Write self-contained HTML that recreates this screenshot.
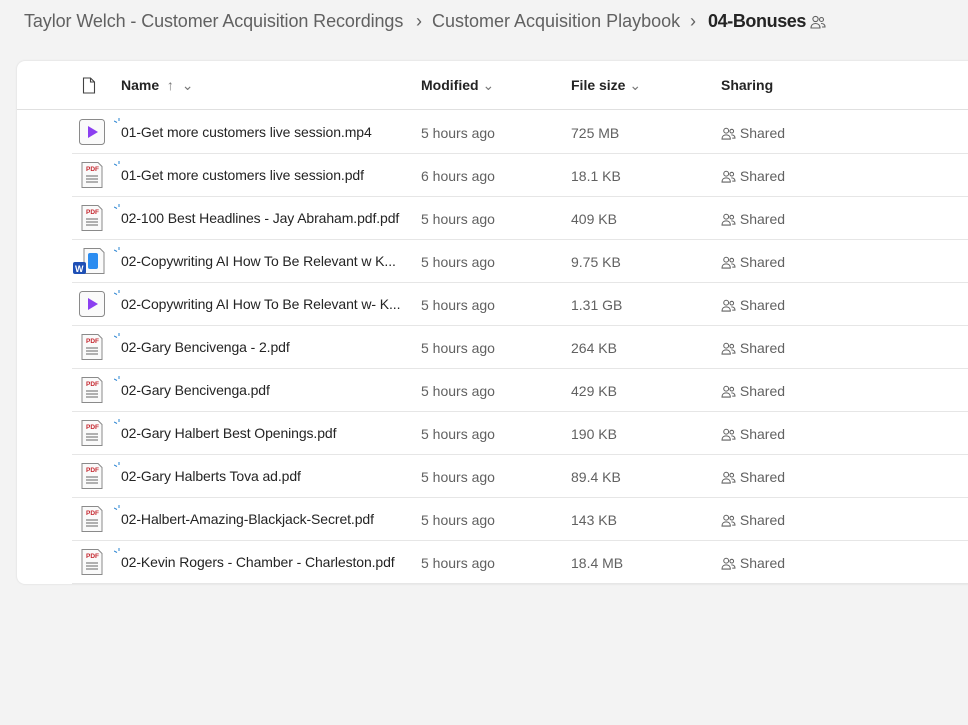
<!DOCTYPE html>
<html><head><style>
*{box-sizing:border-box;margin:0;padding:0}
body{width:968px;height:725px;background:#f3f3f3;font-family:"Liberation Sans",sans-serif;overflow:hidden;position:relative;color:#242424}
.bc{position:absolute;top:11px;left:24px;font-size:18px;color:#616161;white-space:nowrap}
.bc span{position:absolute;top:0;white-space:nowrap}
.card{position:absolute;left:17px;top:61px;width:960px;height:523px;background:#fff;border-radius:8px;box-shadow:0 0 2px rgba(0,0,0,.12)}
.hdr{position:absolute;left:0;top:0;width:100%;height:49px;border-bottom:1px solid #e0e0e0;font-size:14px;font-weight:bold}
.hdr span{position:absolute;top:16px}
.row{position:absolute;left:55px;width:905px;height:43px;border-bottom:1px solid #e6e6e6;font-size:14px}
.row .n{position:absolute;left:49px;top:13px;color:#242424;letter-spacing:-0.1px}
.row .m{position:absolute;left:349px;top:14px;color:#616161}
.row .s{position:absolute;left:499px;top:14px;color:#616161}
.row .sh{position:absolute;left:649px;top:14px;color:#616161}
.ic{position:absolute;left:6px;top:7px}
.spin{position:absolute;left:42px;top:7px}
</style></head><body>
<div class="bc">
<span style="left:0;letter-spacing:-0.1px">Taylor Welch - Customer Acquisition Recordings</span>
<span style="left:392px">›</span>
<span style="left:408px">Customer Acquisition Playbook</span>
<span style="left:666px">›</span>
<span style="left:684px;color:#242424;font-weight:bold;letter-spacing:-0.4px">04-Bonuses</span>
<svg style="position:absolute;left:786px;top:4px" width="16" height="14" viewBox="0 0 16 14" fill="none" stroke="#616161" stroke-width="1.1"><circle cx="5.5" cy="4" r="2.6"/><path d="M1 13c0-3 2-4.5 4.5-4.5S10 10 10 13z"/><circle cx="11.5" cy="4.5" r="2"/><path d="M11 8.5c2.5 0 4 1 4 3.5h-3"/></svg>
</div>
<div class="card">
<div class="hdr">
<svg style="position:absolute;left:65px;top:16px" width="14" height="17" viewBox="0 0 14 17" fill="none" stroke="#424242" stroke-width="1.1"><path d="M1.5 1h7l4 4v11h-11z M8.5 1v4h4"/></svg>
<span style="left:104px">Name <span style="position:static;font-weight:normal;color:#777">&nbsp;↑ &nbsp;⌄</span></span>
<span style="left:404px">Modified <span style="position:static;font-weight:normal;color:#777">⌄</span></span>
<span style="left:554px">File size <span style="position:static;font-weight:normal;color:#777">⌄</span></span>
<span style="left:704px">Sharing</span>
</div>
</div>
<div id="rows"></div>
<script>
var d=[["v","01-Get more customers live session.mp4","5 hours ago","725 MB"],
["p","01-Get more customers live session.pdf","6 hours ago","18.1 KB"],
["p","02-100 Best Headlines - Jay Abraham.pdf.pdf","5 hours ago","409 KB"],
["w","02-Copywriting AI How To Be Relevant w K...","5 hours ago","9.75 KB"],
["v","02-Copywriting AI How To Be Relevant w- K...","5 hours ago","1.31 GB"],
["p","02-Gary Bencivenga - 2.pdf","5 hours ago","264 KB"],
["p","02-Gary Bencivenga.pdf","5 hours ago","429 KB"],
["p","02-Gary Halbert Best Openings.pdf","5 hours ago","190 KB"],
["p","02-Gary Halberts Tova ad.pdf","5 hours ago","89.4 KB"],
["p","02-Halbert-Amazing-Blackjack-Secret.pdf","5 hours ago","143 KB"],
["p","02-Kevin Rogers - Chamber - Charleston.pdf","5 hours ago","18.4 MB"]];
var icons={
v:'<svg class="ic" width="28" height="28" viewBox="0 0 28 28"><rect x="1.5" y="1.5" width="25" height="25" rx="3" fill="#fafafa" stroke="#8a8a8a"/><path d="M10 8l10 6-10 6z" fill="#8b3ff0"/></svg>',
p:'<svg class="ic" width="28" height="28" viewBox="0 0 28 28"><path d="M4 1.5h16l4 4v21H4z" fill="#fafafa" stroke="#8a8a8a"/><text x="8" y="10" font-size="6.5" font-weight="bold" fill="#c4262e" font-family="Liberation Sans">PDF</text><path d="M8 15h12M8 18h12M8 21h12" stroke="#666" stroke-width="1"/></svg>',
w:'<svg class="ic" width="28" height="30" viewBox="0 0 28 30"><path d="M6 1.5h16l4 4v21H6z" fill="#fafafa" stroke="#8a8a8a"/><rect x="10" y="6" width="10" height="16" rx="2" fill="#2b8cf0"/><rect x="-5" y="15" width="13" height="12" rx="2" fill="#1e4fb5"/><text x="-3" y="25" font-size="9" font-weight="bold" fill="#fff" font-family="Liberation Sans">W</text></svg>'};
var h='';
d.forEach(function(r,i){
h+='<div class="row" style="top:'+(111+i*43)+'px;left:72px">'+icons[r[0]].replace('class="ic"','class="ic" style="overflow:visible"')+
'<svg class="spin" width="8" height="8" viewBox="0 0 8 8" stroke="#2a84d2" stroke-width="1"><path d="M5 0v3M0 3l3 1.5"/></svg>'+
'<span class="n">'+r[1]+'</span><span class="m">'+r[2]+'</span><span class="s">'+r[3]+'</span>'+
'<span class="sh"><svg width="15" height="13" viewBox="0 0 16 14" fill="none" stroke="#616161" stroke-width="1.1" style="vertical-align:-2px"><circle cx="5.5" cy="4" r="2.6"/><path d="M1 13c0-3 2-4.5 4.5-4.5S10 10 10 13z"/><circle cx="11.5" cy="4.5" r="2"/><path d="M11 8.5c2.5 0 4 1 4 3.5h-3"/></svg> Shared</span></div>';
});
document.getElementById('rows').innerHTML=h;
</script>
</body></html>
